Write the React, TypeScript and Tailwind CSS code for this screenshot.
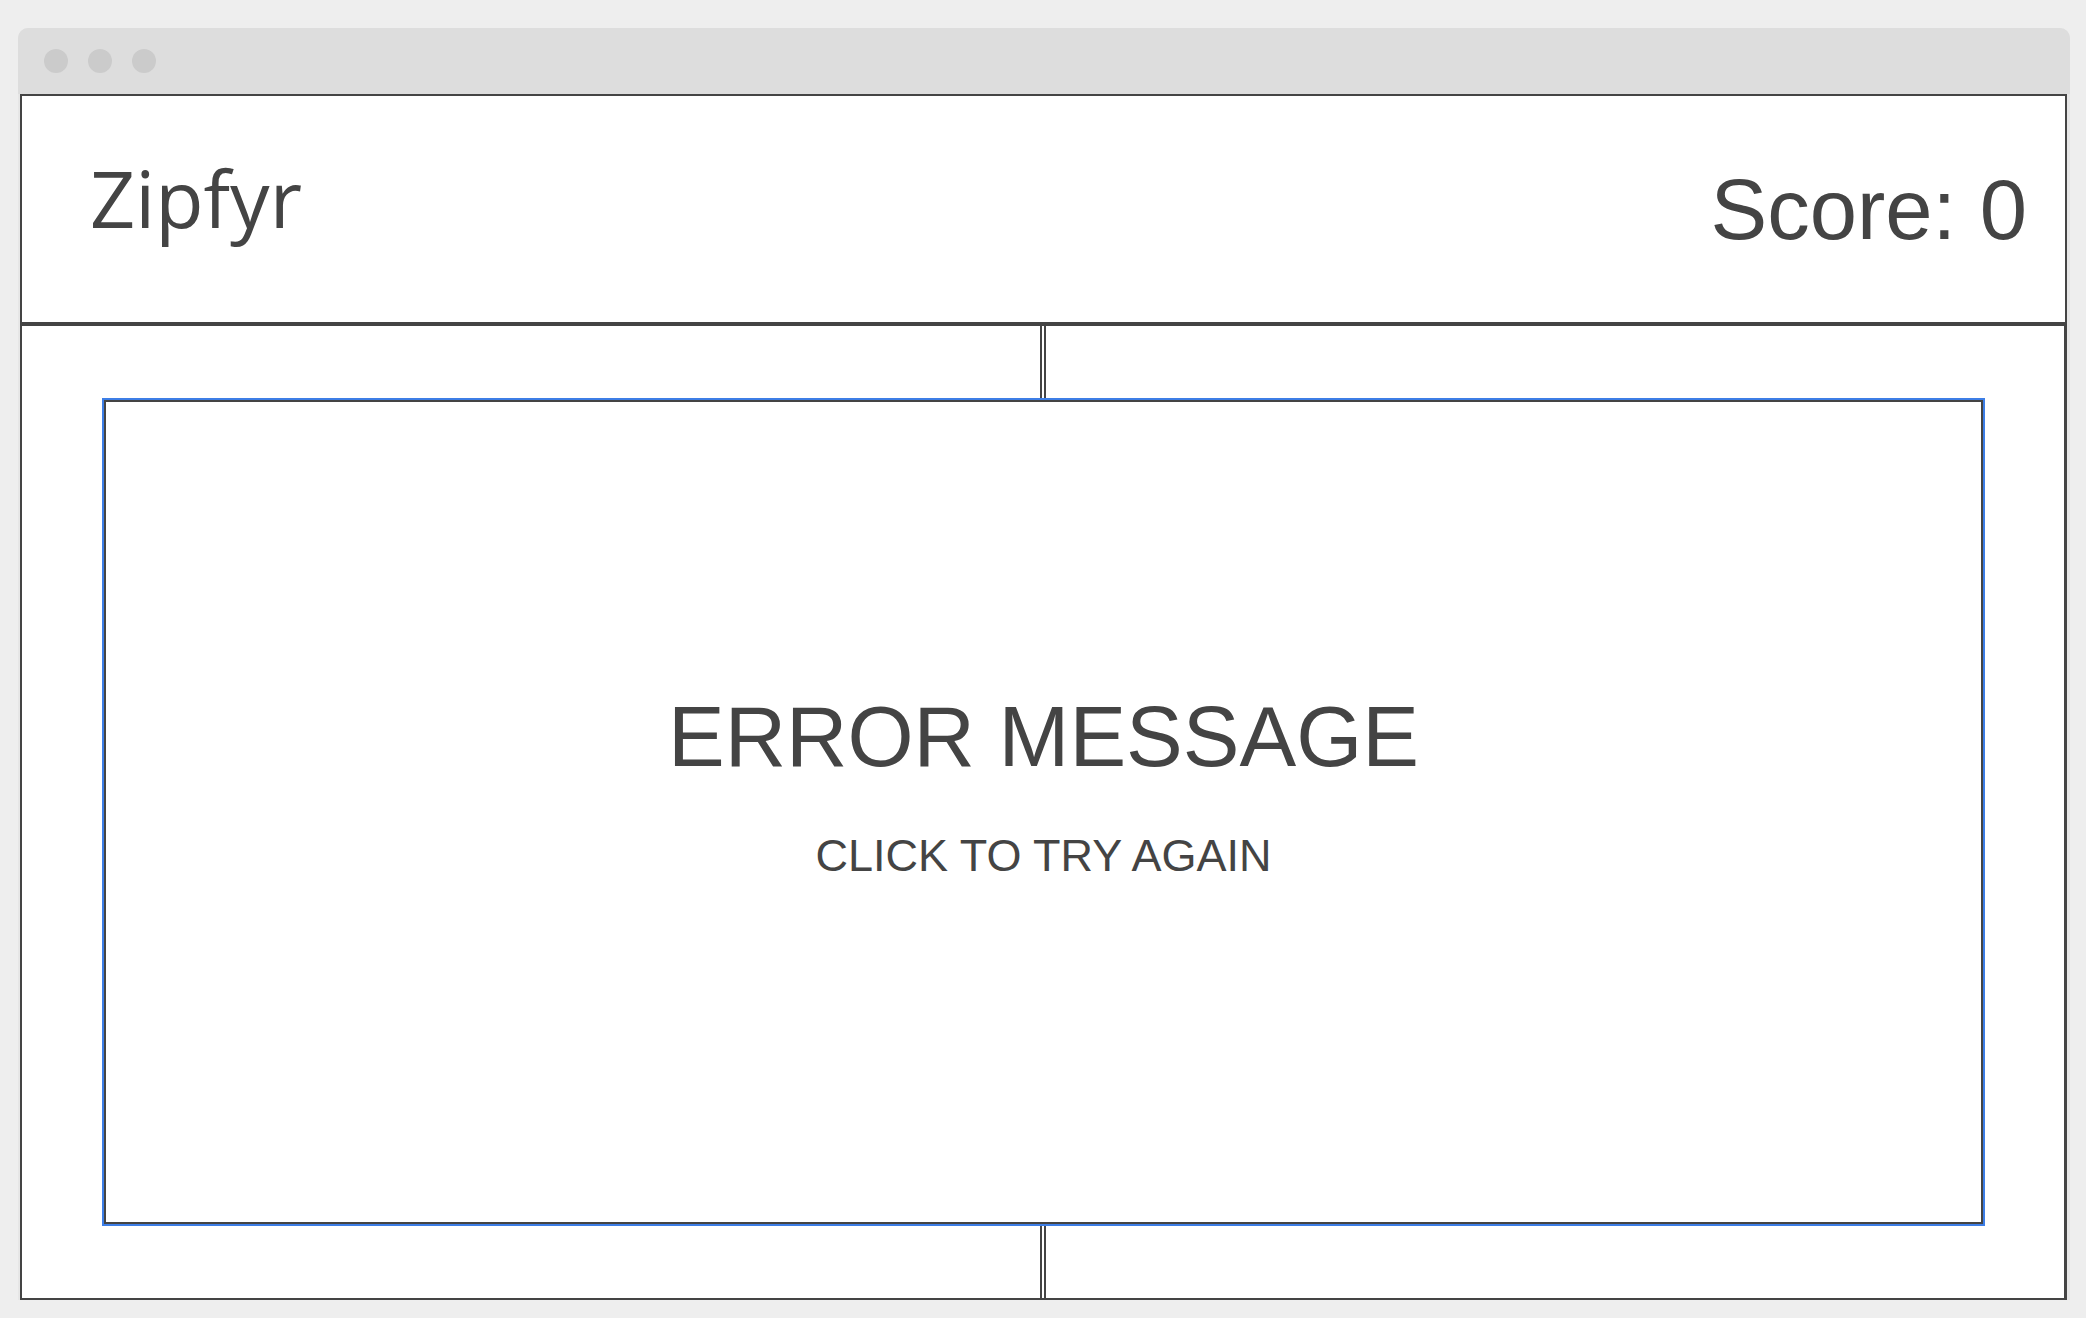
export default function App() {
  return (
    <div className="h-[1318px] w-full bg-[#eeeeee] pt-[28px] px-[16px]" style={{ fontFamily: '"Liberation Sans", Arial, sans-serif' }}>
      <BrowserWindow>
        <GameScreen />
      </BrowserWindow>
    </div>
  )
}

function BrowserWindow({ children }: { children: React.ReactNode }) {
  return (
    <div className="w-[2052px] ml-[2px] rounded-t-[10px] bg-[#e6e6e6] flex flex-col">
      <div className="h-[66px] rounded-t-[10px] bg-[#dddddd] flex items-center gap-5 pl-[26px]">
        <span className="w-6 h-6 rounded-full bg-[#cbcbcb]" />
        <span className="w-6 h-6 rounded-full bg-[#cbcbcb]" />
        <span className="w-6 h-6 rounded-full bg-[#cbcbcb]" />
      </div>
      <div className="ml-[2px] mr-[3px]">{children}</div>
    </div>
  )
}

function GameScreen() {
  return (
    <div className="border-2 border-[#444444] bg-white text-[#444444]">
      <header className="h-[230px] border-b-4 border-[#444444] flex items-center justify-between pl-[68px] pr-[38px]">
        <h1 className="text-[79px] leading-none pb-[24px]" style={{ fontFamily: '"Open Sans", sans-serif' }}>
          Zipfyr
        </h1>
        <div className="text-[85px] leading-none">Score: 0</div>
      </header>

      <main className="relative h-[972px] flex">
        <section className="flex-1 border-r-2 border-[#444444]" />
        <div className="w-[2px]" />
        <section className="flex-1 border-l-2 border-r border-[#444444]" />

        {/* error overlay */}
        <button className="absolute top-[74px] bottom-[74px] left-[82px] right-[82px] bg-white border-2 border-[#444444] outline-2 outline-[#3d7ee6] flex flex-col items-center pt-[292px] cursor-pointer text-[#444444]">
          <span className="text-[85px] leading-none">ERROR MESSAGE</span>
          <span className="mt-[54px] text-[45px] leading-none">CLICK TO TRY AGAIN</span>
        </button>
      </main>
    </div>
  )
}
